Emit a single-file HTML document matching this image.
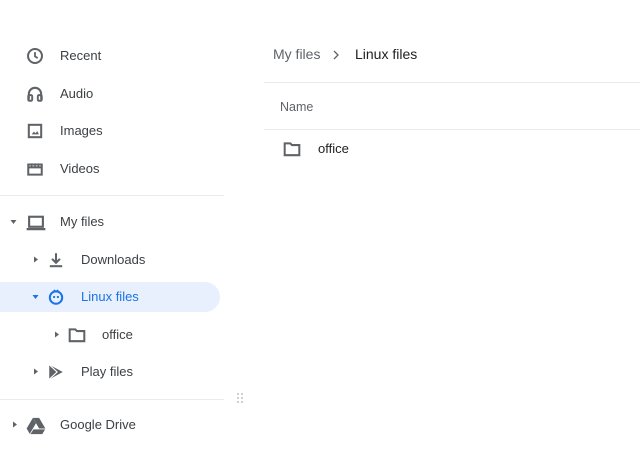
<html><head><style>
body{margin:0;width:640px;height:460px;background:#fff;font-family:"Liberation Sans",sans-serif;font-size:13px;color:#3c4043;position:relative;overflow:hidden}
.a{position:absolute}
.t{position:absolute;line-height:16px;transform:translateY(-8px)}
.ic{position:absolute;transform:translate(-9px,-9px)}
.tri{position:absolute;width:0;height:0}
.r{border-top:3.5px solid transparent;border-bottom:3.5px solid transparent;border-left:4px solid #5f6368;transform:translate(-2px,-3.5px)}
.d{border-left:3.5px solid transparent;border-right:3.5px solid transparent;border-top:4px solid #5f6368;transform:translate(-3.5px,-2px)}
.hr{position:absolute;height:1px;background:#e8eaed}
</style></head><body>
<div class="a" style="left:0;top:282px;width:220px;height:30px;background:#e8f0fe;border-radius:0 15px 15px 0"></div>
<div class="hr" style="left:0;top:195px;width:224px"></div>
<div class="hr" style="left:0;top:399px;width:224px"></div>
<div class="hr" style="left:264px;top:82px;width:376px"></div>
<div class="hr" style="left:264px;top:129px;width:376px"></div>

<svg class="ic" style="left:35px;top:56px" width="18" height="18" viewBox="0 0 16 16"><circle cx="8" cy="8" r="6.2" fill="none" stroke="#5f6368" stroke-width="1.8"/><path d="M8 4.5V8.3l2.4 1.6" fill="none" stroke="#5f6368" stroke-width="1.6"/></svg>
<div class="t" style="left:60px;top:56px">Recent</div>
<svg class="ic" style="left:35px;top:94px" width="18" height="18" viewBox="0 0 16 16"><path d="M2.5 13V8a5.5 5.5 0 0 1 11 0v5" fill="none" stroke="#5f6368" stroke-width="1.8"/><rect x="2" y="9" width="3.5" height="5" rx="1" fill="none" stroke="#5f6368" stroke-width="1.7"/><rect x="10.5" y="9" width="3.5" height="5" rx="1" fill="none" stroke="#5f6368" stroke-width="1.7"/></svg>
<div class="t" style="left:60px;top:94px">Audio</div>
<svg class="ic" style="left:35px;top:131px" width="18" height="18" viewBox="0 0 16 16"><rect x="2.5" y="2.5" width="11" height="11" fill="none" stroke="#5f6368" stroke-width="1.8"/><path d="M5 11l2-2.5 1.5 1.5 1.5-2 1.5 3z" fill="#5f6368"/></svg>
<div class="t" style="left:60px;top:131px">Images</div>
<svg class="ic" style="left:35px;top:169px" width="18" height="18" viewBox="0 0 16 16"><path d="M2 4h12v9H2z M2 6.5h12" fill="none" stroke="#5f6368" stroke-width="1.8"/><path d="M5 3v3M8 3v3M11 3v3" stroke="#5f6368" stroke-width="1.4"/></svg>
<div class="t" style="left:60px;top:169px">Videos</div>

<div class="tri d" style="left:14px;top:222px"></div>
<svg class="ic" style="left:35px;top:222px" width="20" height="20" viewBox="0 0 16 16"><rect x="2.5" y="3" width="11" height="8" fill="none" stroke="#5f6368" stroke-width="1.7"/><rect x="0.5" y="12" width="15" height="1.8" fill="#5f6368"/></svg>
<div class="t" style="left:60px;top:222px">My files</div>

<div class="tri r" style="left:36px;top:260px"></div>
<svg class="ic" style="left:56px;top:260px" width="18" height="18" viewBox="0 0 16 16"><path d="M8 2v8M4.5 7L8 10.5 11.5 7" fill="none" stroke="#5f6368" stroke-width="1.8"/><path d="M2.5 13.5h11" stroke="#5f6368" stroke-width="1.8"/></svg>
<div class="t" style="left:81px;top:260px">Downloads</div>

<div class="tri d" style="left:36px;top:297px;border-top-color:#1a73e8"></div>
<svg class="ic" style="left:56px;top:297px" width="18" height="18" viewBox="0 0 16 16"><circle cx="8" cy="8.5" r="5.5" fill="none" stroke="#1a73e8" stroke-width="1.8"/><path d="M6 1.8l2 1.5 2-1.5" fill="none" stroke="#1a73e8" stroke-width="1.4"/><circle cx="6.3" cy="8" r="1" fill="#1a73e8"/><circle cx="9.7" cy="8" r="1" fill="#1a73e8"/></svg>
<div class="t" style="left:81px;top:297px;color:#1a73e8">Linux files</div>

<div class="tri r" style="left:57px;top:335px"></div>
<svg class="ic" style="left:77px;top:335px" width="18" height="18" viewBox="0 0 16 16"><path d="M1.5 3h5l1.5 1.5h6.5v9h-13z" fill="none" stroke="#5f6368" stroke-width="1.8"/></svg>
<div class="t" style="left:102px;top:335px">office</div>

<div class="tri r" style="left:36px;top:372px"></div>
<svg class="ic" style="left:56px;top:372px" width="18" height="18" viewBox="0 0 16 16"><path d="M2 1.5L14 8 2 14.5z" fill="#5f6368"/><path d="M2 1.5L9 8 2 14.5" fill="none" stroke="#fff" stroke-width="1"/></svg>
<div class="t" style="left:81px;top:372px">Play files</div>

<div class="tri r" style="left:15px;top:425px"></div>
<svg class="ic" style="left:35px;top:425px" width="20" height="20" viewBox="0 0 16 16"><path d="M5.5 1.5h5L15.5 10h-5z" fill="#5f6368"/><path d="M5.5 1.5L.5 10l2.5 4.3L8 5.8z" fill="#5f6368"/><path d="M3.5 14.5h9.5l2.3-3.8H6z" fill="#5f6368"/></svg>
<div class="t" style="left:60px;top:425px">Google Drive</div>

<svg class="a" style="left:236px;top:392px" width="8" height="12"><g fill="#bdc1c6"><circle cx="2" cy="2" r="1"/><circle cx="6" cy="2" r="1"/><circle cx="2" cy="6" r="1"/><circle cx="6" cy="6" r="1"/><circle cx="2" cy="10" r="1"/><circle cx="6" cy="10" r="1"/></g></svg>

<div class="t" style="left:273px;top:54px;font-size:14px;color:#5f6368">My files</div>
<svg class="a" style="left:332px;top:50px" width="8" height="10"><path d="M2 1l4 4-4 4" fill="none" stroke="#5f6368" stroke-width="1.3"/></svg>
<div class="t" style="left:355px;top:54px;font-size:14px;color:#202124">Linux files</div>
<div class="t" style="left:280px;top:107px;font-size:12.5px;color:#5f6368">Name</div>
<svg class="ic" style="left:292px;top:149px" width="18" height="18" viewBox="0 0 16 16"><path d="M1.5 3h5l1.5 1.5h6.5v9h-13z" fill="none" stroke="#5f6368" stroke-width="1.8"/></svg>
<div class="t" style="left:318px;top:149px;color:#202124">office</div>
</body></html>
